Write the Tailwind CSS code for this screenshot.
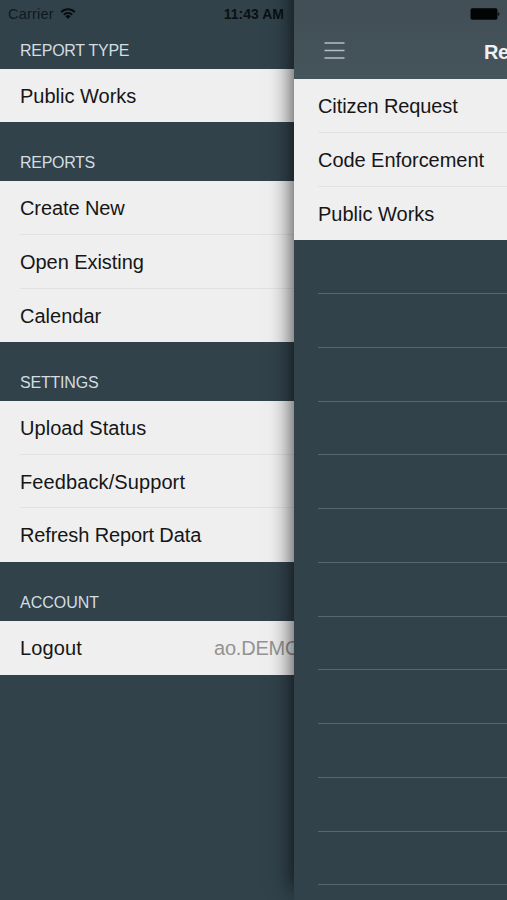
<!DOCTYPE html>
<html lang="en">
<head>
<meta charset="utf-8">
<meta name="viewport" content="width=device-width, initial-scale=1">
<title>Reports</title>
<script src="https://cdn.jsdelivr.net/npm/@tailwindcss/browser@4"></script>
</head>
<body class="bg-[#31424b]">
<div class="flex h-[900px] w-[507px] overflow-hidden bg-[#31424b] font-['Liberation_Sans',Arial,sans-serif] text-[20px] text-[#161616]">

  <!-- Side menu -->
  <aside class="flex w-[294px] shrink-0 flex-col overflow-hidden whitespace-nowrap">
    <div class="flex h-[28px] shrink-0 items-center pl-[8px] text-[14.5px] leading-[28px] text-[#10181d]">
      <span class="w-[46px] tracking-[0.2px]">Carrier</span>
      <svg class="mb-[2px] ml-[6px] h-[13px] w-[16px]" viewBox="0 0 16 13" fill="none" stroke="#070c0f" stroke-width="2">
        <path d="M1.1 5.1a9.8 9.8 0 0 1 13.8 0"/>
        <path d="M3.8 7.8a6 6 0 0 1 8.4 0"/>
        <path d="M8 11.9 5.4 9.3a3.7 3.7 0 0 1 5.2 0z" fill="#070c0f" stroke="none"/>
      </svg>
      <span class="ml-auto mr-[10px] text-[14px] font-bold text-[#0b1013]">11:43 AM</span>
    </div>

    <h2 class="h-[40.7px] shrink-0 pl-[20px] pt-[11px] text-[16px] leading-[24px] tracking-[-0.25px] text-[#d3dde2]">REPORT TYPE</h2>
    <ul class="shrink-0 bg-[#efefef] pl-[20px]">
      <li class="h-[53.7px] leading-[54px]">Public Works</li>
    </ul>

    <h2 class="h-[58.8px] shrink-0 pl-[20px] pt-[29px] text-[16px] leading-[24px] tracking-[-0.3px] text-[#d3dde2]">REPORTS</h2>
    <ul class="shrink-0 bg-[#efefef] pl-[20px]">
      <li class="h-[53.7px] border-b border-[#e1e2e2] leading-[54px] tracking-[-0.1px]">Create New</li>
      <li class="h-[53.7px] border-b border-[#e1e2e2] leading-[54px] tracking-[-0.05px]">Open Existing</li>
      <li class="h-[53.7px] leading-[54px]">Calendar</li>
    </ul>

    <h2 class="h-[58.8px] shrink-0 pl-[20px] pt-[29px] text-[16px] leading-[24px] tracking-[-0.2px] text-[#d3dde2]">SETTINGS</h2>
    <ul class="shrink-0 bg-[#efefef] pl-[20px]">
      <li class="h-[53.7px] border-b border-[#e1e2e2] leading-[54px] tracking-[0.05px]">Upload Status</li>
      <li class="h-[53.7px] border-b border-[#e1e2e2] leading-[54px] tracking-[0.1px]">Feedback/Support</li>
      <li class="h-[53.7px] leading-[54px] tracking-[-0.12px]">Refresh Report Data</li>
    </ul>

    <h2 class="h-[58.8px] shrink-0 pl-[20px] pt-[29px] text-[16px] leading-[24px] text-[#d3dde2]">ACCOUNT</h2>
    <ul class="shrink-0 bg-[#efefef] pl-[20px]">
      <li class="flex h-[53.7px] leading-[54px]"><span class="w-[194px] shrink-0 tracking-[0.15px]">Logout</span><span class="tracking-[-0.2px] text-[#939393]">ao.DEMO</span></li>
    </ul>
  </aside>

  <!-- Main panel, slid to the right -->
  <div class="relative w-[213px] shrink-0">
    <div class="absolute inset-x-0 top-[-20px] bottom-[10px] shadow-[0_0_22px_1px_rgba(0,0,0,0.75)]"></div>
    <main class="relative flex h-full flex-col overflow-hidden bg-[#31424b]">
      <header class="h-[79.3px] shrink-0 bg-linear-to-b from-[#414e56] to-[#46545b]">
        <div class="flex h-[27px] items-center justify-end pr-[7px]">
          <svg class="h-[12px] w-[30px]" viewBox="0 0 30 12" fill="#030405">
            <rect x="0.5" y="0.3" width="27" height="11.4" rx="1.8"/>
            <path d="M28.2 4.2c1.700.4 1.700 3.200 0 3.600z"/>
          </svg>
        </div>
        <div class="flex h-[52px] pl-[30px]">
          <svg class="mt-[14px] h-[20px] w-[21px] shrink-0" viewBox="0 0 21 20" stroke="#b4c0c5" stroke-width="1.7">
            <path d="M.5 2H20.500M.5 9.500H20.500M.5 17H20.500"/>
          </svg>
          <div class="ml-[139px] w-[23px] overflow-hidden whitespace-nowrap pt-[11px] text-[20px] font-bold leading-[28px] tracking-[-0.5px] text-[#eef2f4]">Reports</div>
        </div>
      </header>
      <ul class="shrink-0 whitespace-nowrap bg-[#efefef] pl-[24px]">
        <li class="h-[53.7px] border-b border-[#e1e2e2] leading-[54px] tracking-[-0.1px]">Citizen Request</li>
        <li class="h-[53.7px] border-b border-[#e1e2e2] leading-[54px] tracking-[-0.05px]">Code Enforcement</li>
        <li class="h-[53.7px] leading-[54px]">Public Works</li>
      </ul>
      <div class="pl-[24px]">
        <div class="h-[53.75px] border-b border-[#586870]"></div>
        <div class="h-[53.75px] border-b border-[#586870]"></div>
        <div class="h-[53.75px] border-b border-[#586870]"></div>
        <div class="h-[53.75px] border-b border-[#586870]"></div>
        <div class="h-[53.75px] border-b border-[#586870]"></div>
        <div class="h-[53.75px] border-b border-[#586870]"></div>
        <div class="h-[53.75px] border-b border-[#586870]"></div>
        <div class="h-[53.75px] border-b border-[#586870]"></div>
        <div class="h-[53.75px] border-b border-[#586870]"></div>
        <div class="h-[53.75px] border-b border-[#586870]"></div>
        <div class="h-[53.75px] border-b border-[#586870]"></div>
        <div class="h-[53.75px] border-b border-[#586870]"></div>
      </div>
    </main>
  </div>
</div>
</body>
</html>
